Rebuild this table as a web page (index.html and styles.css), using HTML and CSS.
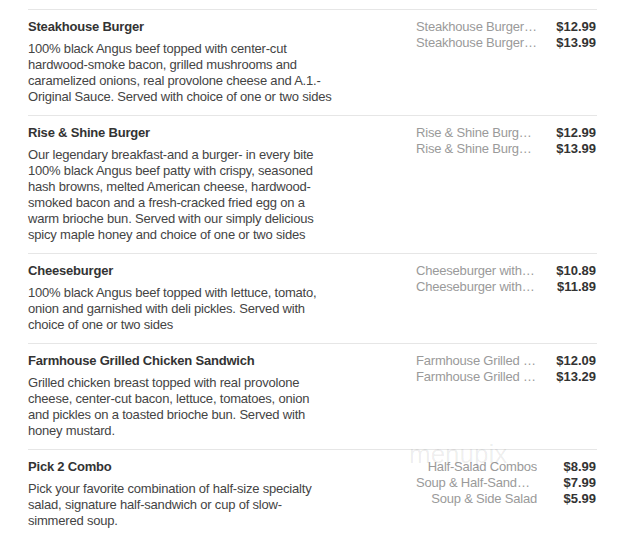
FILE: index.html
```html
<!DOCTYPE html>
<html>
<head>
<meta charset="utf-8">
<link rel="stylesheet" href="styles.css">
</head>
<body>
<div class="menu">
  <div class="item">
    <div class="info">
      <div class="title">Steakhouse Burger</div>
      <div class="desc">100% black Angus beef topped with center-cut hardwood-smoke bacon, grilled mushrooms and caramelized onions, real provolone cheese and A.1.-Original Sauce. Served with choice of one or two sides</div>
    </div>
    <div class="prices">
      <span class="name">Steakhouse Burger with one side</span><span class="price">$12.99</span>
      <span class="name">Steakhouse Burger with two sides</span><span class="price">$13.99</span>
    </div>
  </div>
  <div class="item">
    <div class="info">
      <div class="title">Rise &amp; Shine Burger</div>
      <div class="desc">Our legendary breakfast-and a burger- in every bite 100% black Angus beef patty with crispy, seasoned hash browns, melted American cheese, hardwood-smoked bacon and a fresh-cracked fried egg on a warm brioche bun. Served with our simply delicious spicy maple honey and choice of one or two sides</div>
    </div>
    <div class="prices">
      <span class="name">Rise &amp; Shine Burger with one side</span><span class="price">$12.99</span>
      <span class="name">Rise &amp; Shine Burger with two sides</span><span class="price">$13.99</span>
    </div>
  </div>
  <div class="item">
    <div class="info">
      <div class="title">Cheeseburger</div>
      <div class="desc">100% black Angus beef topped with lettuce, tomato, onion and garnished with deli pickles. Served with choice of one or two sides</div>
    </div>
    <div class="prices">
      <span class="name">Cheeseburger with one side</span><span class="price">$10.89</span>
      <span class="name">Cheeseburger with two sides</span><span class="price">$11.89</span>
    </div>
  </div>
  <div class="item">
    <div class="info">
      <div class="title">Farmhouse Grilled Chicken Sandwich</div>
      <div class="desc">Grilled chicken breast topped with real provolone cheese, center-cut bacon, lettuce, tomatoes, onion and pickles on a toasted brioche bun. Served with honey mustard.</div>
    </div>
    <div class="prices">
      <span class="name">Farmhouse Grilled Chicken Sandwich with one side</span><span class="price">$12.09</span>
      <span class="name">Farmhouse Grilled Chicken Sandwich with two sides</span><span class="price">$13.29</span>
    </div>
  </div>
  <div class="item">
    <div class="info">
      <div class="title">Pick 2 Combo</div>
      <div class="desc">Pick your favorite combination of half-size specialty salad, signature half-sandwich or cup of slow-simmered soup.</div>
    </div>
    <div class="prices">
      <span class="name">Half-Salad Combos</span><span class="price">$8.99</span>
      <span class="name">Soup &amp; Half-Sandwich Combos</span><span class="price">$7.99</span>
      <span class="name">Soup &amp; Side Salad</span><span class="price">$5.99</span>
    </div>
  </div>
</div>
<div class="watermark">menupix</div>
</body>
</html>
```

FILE: styles.css
```css
body {
  margin: 0;
  background: #fff;
  font-family: "Liberation Sans", Arial, sans-serif;
  font-size: 13px;
  line-height: 16px;
  letter-spacing: -0.2px;
}

.menu {
  margin-left: 28px;
  width: 569px;
  padding-top: 9px;
}

.item {
  display: flex;
  justify-content: space-between;
  align-items: flex-start;
  border-top: 1px solid #e6e6e6;
  padding: 9px 0 10px;
}

.info {
  width: 304px;
}

.title {
  font-weight: bold;
  color: #333;
  margin-bottom: 6px;
}

.desc {
  color: #444;
}

.prices {
  display: grid;
  grid-template-columns: 121px 59px;
  padding-right: 1px;
}

.name {
  color: #9a9a9a;
  text-align: right;
  white-space: nowrap;
  overflow: hidden;
  text-overflow: ellipsis;
}

.price {
  color: #333;
  font-weight: bold;
  text-align: right;
  letter-spacing: 0;
}

.watermark {
  position: absolute;
  left: 409px;
  top: 441px;
  font-family: "Liberation Sans", Arial, sans-serif;
  font-size: 26px;
  line-height: 26px;
  letter-spacing: 0;
  color: rgba(0, 0, 0, 0.07);
}
```
